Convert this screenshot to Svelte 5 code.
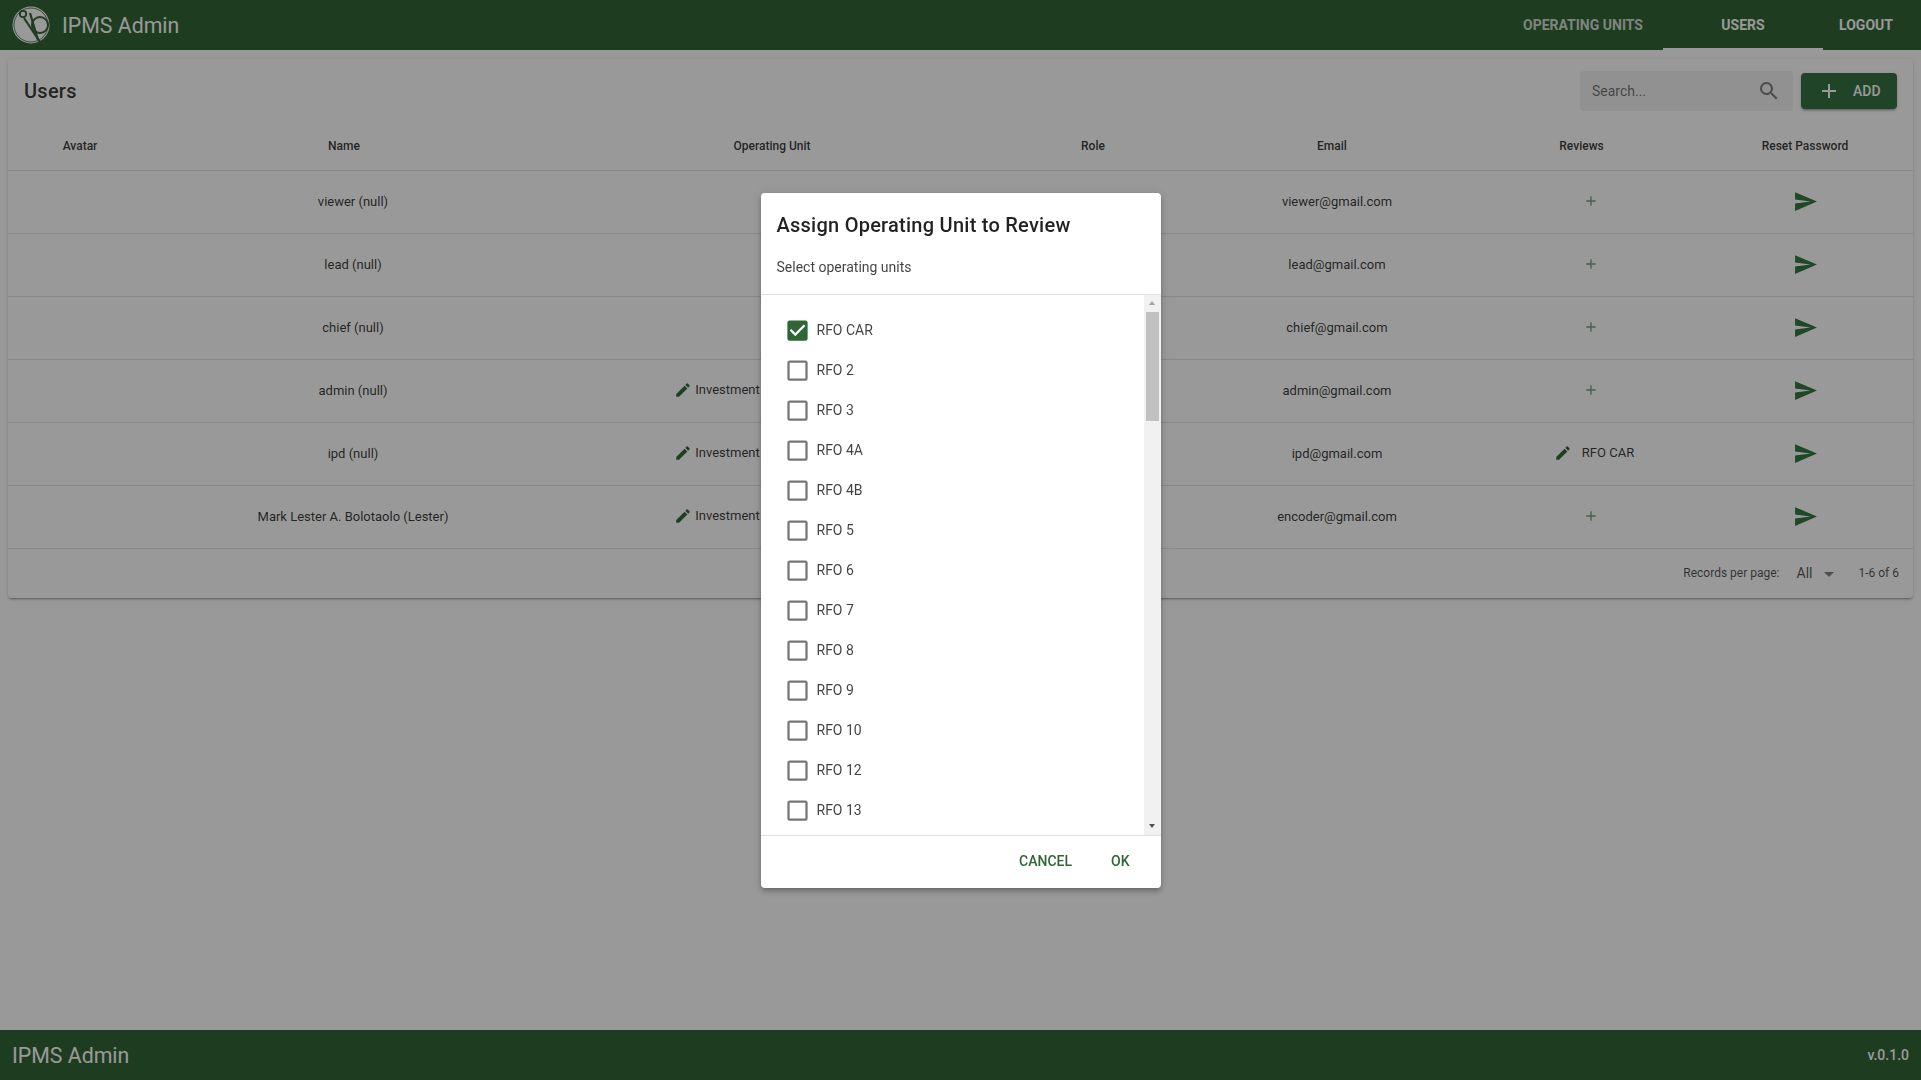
<script lang="ts">
  const users = [
    { name: 'viewer (null)', unit: '', email: 'viewer@gmail.com', review: '' },
    { name: 'lead (null)', unit: '', email: 'lead@gmail.com', review: '' },
    { name: 'chief (null)', unit: '', email: 'chief@gmail.com', review: '' },
    { name: 'admin (null)', unit: 'Investment Programming Division', email: 'admin@gmail.com', review: '' },
    { name: 'ipd (null)', unit: 'Investment Programming Division', email: 'ipd@gmail.com', review: 'RFO CAR' },
    { name: 'Mark Lester A. Bolotaolo (Lester)', unit: 'Investment Programming Division', email: 'encoder@gmail.com', review: '' }
  ];

  const columns = ['Avatar', 'Name', 'Operating Unit', 'Role', 'Email', 'Reviews'];

  const units = ['RFO CAR', 'RFO 2', 'RFO 3', 'RFO 4A', 'RFO 4B', 'RFO 5', 'RFO 6', 'RFO 7', 'RFO 8', 'RFO 9', 'RFO 10', 'RFO 12', 'RFO 13'];

  const pencil = 'M20.71,7.04C21.1,6.65 21.1,6 20.71,5.63L18.37,3.29C18,2.9 17.35,2.9 16.96,3.29L15.12,5.12L18.87,8.87M3,17.25V21H6.75L17.81,9.93L14.06,6.18L3,17.25Z';
  const plus = 'M19,13H13V19H11V13H5V11H11V5H13V11H19V13Z';
  const send = 'M2,21L23,12L2,3V10L17,12L2,14V21Z';
  const magnify = 'M9.5,3A6.5,6.5 0 0,1 16,9.5C16,11.11 15.41,12.59 14.44,13.73L14.71,14H15.5L20.5,19L19,20.5L14,15.5V14.71L13.73,14.44C12.59,15.41 11.11,16 9.5,16A6.5,6.5 0 0,1 3,9.5A6.5,6.5 0 0,1 9.5,3M9.5,5C7,5 5,7 5,9.5C5,12 7,14 9.5,14C12,14 14,12 14,9.5C14,7 12,5 9.5,5Z';
  const boxBlank = 'M19,3H5C3.89,3 3,3.89 3,5V19A2,2 0 0,0 5,21H19A2,2 0 0,0 21,19V5C21,3.89 20.1,3 19,3M19,5V19H5V5H19Z';
  const boxMarked = 'M10,17L5,12L6.41,10.59L10,14.17L17.59,6.58L19,8M19,3H5C3.89,3 3,3.89 3,5V19A2,2 0 0,0 5,21H19A2,2 0 0,0 21,19V5C21,3.89 20.1,3 19,3Z';
</script>

{#snippet icon(d: string, size: number, cls = '')}
  <svg class="icon {cls}" viewBox="0 0 24 24" width={size} height={size}><path {d} /></svg>
{/snippet}

<div class="page">
  <header class="topbar">
    <svg class="logo" viewBox="0 0 40 40" width="40" height="40">
      <circle cx="20" cy="20" r="18.5" fill="#fff" />
      <circle cx="20" cy="20" r="17" fill="none" stroke="#1b5321" stroke-width="0.8" />
      <circle cx="12" cy="9" r="3.2" fill="#fff" stroke="#1b5321" stroke-width="1.8" />
      <path d="M13 13 L29 37" stroke="#1b5321" stroke-width="2.2" fill="none" />
      <path d="M19 8 L27 35" stroke="#1b5321" stroke-width="2.2" fill="none" />
      <circle cx="29" cy="20" r="8" fill="none" stroke="#1b5321" stroke-width="2" />
    </svg>
    <span class="brand">IPMS Admin</span>
    <nav class="tabs">
      <a class="tab" href="#units">OPERATING UNITS</a>
      <a class="tab active" href="#users">USERS</a>
      <a class="tab logout" href="#logout">LOGOUT</a>
    </nav>
  </header>

  <main class="content">
    <section class="card">
      <div class="card-title">
        <h2>Users</h2>
        <div class="search">
          <span class="placeholder">Search...</span>
          {@render icon(magnify, 24, 'muted')}
        </div>
        <button class="add">
          {@render icon(plus, 24, 'light')}
          <span>ADD</span>
        </button>
      </div>

      <table>
        <colgroup>
          <col style="width:162px" />
          <col style="width:366px" />
          <col style="width:490px" />
          <col style="width:152px" />
          <col style="width:318px" />
          <col style="width:201px" />
          <col />
        </colgroup>
        <thead>
          <tr>
            {#each columns as col}
              <th><span class="sortable {col.toLowerCase()}">{col}</span></th>
            {/each}
            <th>Reset Password</th>
          </tr>
        </thead>
        <tbody>
          {#each users as user}
            <tr>
              <td></td>
              <td>{user.name}</td>
              <td>
                {#if user.unit}
                  <span class="assigned">{@render icon(pencil, 18, 'dark')}<span>{user.unit}</span></span>
                {/if}
              </td>
              <td></td>
              <td>{user.email}</td>
              <td>
                {#if user.review}
                  <span class="assigned wide">{@render icon(pencil, 18, 'dark')}<span>{user.review}</span></span>
                {:else}
                  <span class="add-review">{@render icon(plus, 16, 'primary faint')}</span>
                {/if}
              </td>
              <td>{@render icon(send, 25, 'green')}</td>
            </tr>
          {/each}
        </tbody>
      </table>

      <div class="table-footer">
        <span>Records per page:</span>
        <span class="per-page">All<i class="caret"></i></span>
        <span>1-6 of 6</span>
      </div>
    </section>
  </main>

  <footer class="bottombar">
    <span class="brand">IPMS Admin</span>
    <span class="version">v.0.1.0</span>
  </footer>
</div>

<div class="overlay"></div>
<div class="dialog-wrap">
  <div class="dialog">
    <div class="dialog-head">
      <h3>Assign Operating Unit to Review</h3>
      <p>Select operating units</p>
    </div>
    <div class="dialog-body">
      <div class="options">
        {#each units as unit, i}
          <div class="option">
            {@render icon(i === 0 ? boxMarked : boxBlank, 27, i === 0 ? 'primary' : 'blank')}
            <span>{unit}</span>
          </div>
        {/each}
      </div>
      <!-- headless browser hides native scrollbars, so this one is drawn -->
      <div class="scrollbar">
        <i class="arrow up"></i>
        <div class="track"><div class="thumb"></div></div>
        <i class="arrow down"></i>
      </div>
    </div>
    <div class="dialog-actions">
      <button class="text-btn">CANCEL</button>
      <button class="text-btn">OK</button>
    </div>
  </div>
</div>

<style>
  :global(body) {
    margin: 0;
    background: #fff;
    font-family: Roboto, 'Liberation Sans', sans-serif;
    color: rgba(0, 0, 0, 0.87);
    overflow: hidden;
  }

  .page {
    display: flex;
    flex-direction: column;
    height: 1080px;
  }

  .icon {
    display: block;
    flex: none;
    fill: currentColor;
  }

  .icon.primary { color: #2e6635; }
  .icon.green { color: #1c6a2c; }
  .icon.dark { color: #1c5a28; }
  .icon.muted { color: rgba(0, 0, 0, 0.54); }
  .icon.light { color: #fff; }
  .icon.blank { color: rgba(0, 0, 0, 0.54); }
  .icon.faint { opacity: 0.7; }

  /* Top bar */
  .topbar {
    display: flex;
    align-items: center;
    height: 50px;
    padding: 0 12px 0 11px;
    background: #1b5321;
    box-sizing: border-box;
    flex: none;
  }

  .logo {
    margin-right: 11px;
  }

  .brand {
    color: #fff;
    font-size: 21.3px;
    font-weight: 400;
  }

  .tabs {
    display: flex;
    height: 100%;
    margin-left: auto;
  }

  .tab {
    display: flex;
    align-items: center;
    justify-content: center;
    width: 160px;
    height: 100%;
    box-sizing: border-box;
    color: rgba(255, 255, 255, 0.8);
    font-size: 14px;
    font-weight: 700;
    text-decoration: none;
  }

  .tab.active {
    color: #fff;
    border-bottom: 2px solid #fff;
    padding-top: 2px;
  }

  .tab.logout {
    width: 86px;
    color: #fff;
  }

  /* Card */
  .content {
    flex: 1;
    padding: 9px 8px 8px;
  }

  .card {
    background: #fff;
    border-radius: 4px;
    box-shadow: 0 3px 1px -2px rgba(0, 0, 0, 0.2), 0 2px 2px 0 rgba(0, 0, 0, 0.14), 0 1px 5px 0 rgba(0, 0, 0, 0.12);
  }

  .card-title {
    display: flex;
    align-items: center;
    height: 64px;
    padding: 0 16px 0 16px;
    box-sizing: border-box;
  }

  .card-title h2 {
    margin: 0 auto 0 0;
    font-size: 20px;
    font-weight: 500;
    letter-spacing: 0.25px;
  }

  .search {
    display: flex;
    align-items: center;
    justify-content: space-between;
    width: 213px;
    height: 40px;
    padding: 0 12px;
    box-sizing: border-box;
    border-radius: 4px;
    background: rgba(0, 0, 0, 0.06);
  }

  .placeholder {
    font-size: 14px;
    color: rgba(0, 0, 0, 0.6);
  }

  .add {
    display: flex;
    align-items: center;
    width: 96px;
    height: 36px;
    margin-left: 8px;
    padding: 0 0 1px 16px;
    border: none;
    border-radius: 4px;
    background: #1f622f;
    color: #fff;
    font: 500 14px Roboto, sans-serif;
    box-shadow: 0 3px 1px -2px rgba(0, 0, 0, 0.2), 0 2px 2px 0 rgba(0, 0, 0, 0.14), 0 1px 5px 0 rgba(0, 0, 0, 0.12);
  }

  .add span {
    margin-left: 12px;
  }

  /* Table */
  table {
    width: 100%;
    table-layout: fixed;
    border-collapse: collapse;
  }

  th, td {
    text-align: center;
    border-bottom: 1px solid rgba(0, 0, 0, 0.12);
  }

  th {
    height: 47px;
    padding: 0 0 1px;
    box-sizing: border-box;
    font-size: 12px;
    font-weight: 500;
  }

  td {
    padding: 0 0 1px;
    box-sizing: content-box;
    height: 61px;
    font-size: 13px;
  }

  td > .icon {
    margin: 1px auto 0;
  }

  .sortable {
    padding-right: 18px;
  }

  .sortable.email {
    padding-right: 10px;
  }

  .sortable.reviews {
    padding-right: 30px;
  }

  .assigned {
    display: inline-flex;
    align-items: center;
    gap: 3px;
    padding-left: 3px;
    margin-bottom: 2px;
    vertical-align: middle;
  }

  .assigned .icon {
    margin-top: 1px;
  }

  .assigned.wide {
    gap: 10px;
    padding-left: 0;
    padding-right: 5px;
  }

  .add-review {
    display: inline-block;
    padding: 2px 12px 0 0;
  }

  .table-footer {
    display: flex;
    align-items: center;
    justify-content: flex-end;
    height: 49px;
    padding-right: 14px;
    font-size: 12px;
    color: rgba(0, 0, 0, 0.75);
  }

  .per-page {
    display: flex;
    align-items: center;
    margin: 0 24px 0 17px;
    font-size: 14px;
  }

  .caret {
    margin: 2px 0 0 12px;
    border-left: 5px solid transparent;
    border-right: 5px solid transparent;
    border-top: 5px solid rgba(0, 0, 0, 0.54);
  }

  /* Bottom bar */
  .bottombar {
    display: flex;
    align-items: center;
    justify-content: space-between;
    height: 50px;
    padding: 0 12px;
    background: #1b5321;
    flex: none;
  }

  .version {
    color: #fff;
    font-size: 14px;
    font-weight: 500;
  }

  /* Dialog */
  .overlay {
    position: fixed;
    inset: 0;
    background: rgba(33, 33, 33, 0.46);
  }

  .dialog-wrap {
    position: fixed;
    inset: 0;
    display: flex;
    align-items: center;
    justify-content: center;
  }

  .dialog {
    display: flex;
    flex-direction: column;
    width: 400px;
    height: 695px;
    background: #fff;
    border-radius: 4px;
    overflow: hidden;
    box-shadow: 0 2px 4px -1px rgba(0, 0, 0, 0.2), 0 4px 5px 0 rgba(0, 0, 0, 0.14), 0 1px 10px 0 rgba(0, 0, 0, 0.12);
  }

  .dialog-head {
    height: 102px;
    padding: 19px 16px 0;
    box-sizing: border-box;
    border-bottom: 1px solid rgba(0, 0, 0, 0.12);
    flex: none;
  }

  .dialog-head h3 {
    margin: 0;
    font-size: 20px;
    font-weight: 500;
    line-height: 26px;
    letter-spacing: 0.25px;
  }

  .dialog-head p {
    margin: 19px 0 0;
    font-size: 14px;
    line-height: 20px;
    color: rgba(0, 0, 0, 0.75);
  }

  .dialog-body {
    display: flex;
    flex: 1;
    min-height: 0;
  }

  .options {
    flex: 1;
    padding: 16px 0 0 23px;
    overflow: hidden;
  }

  .option {
    display: flex;
    align-items: center;
    gap: 6px;
    height: 40px;
    font-size: 14px;
    color: rgba(0, 0, 0, 0.75);
  }

  .option span {
    margin-bottom: 2px;
  }

  .scrollbar {
    display: flex;
    flex-direction: column;
    align-items: center;
    width: 17px;
    background: #f1f1f1;
    flex: none;
  }

  .track {
    flex: 1;
    width: 13px;
  }

  .thumb {
    height: 109px;
    background: #c1c1c1;
  }

  .arrow {
    width: 0;
    height: 0;
    margin: 6.5px 0;
    border-left: 3.5px solid transparent;
    border-right: 3.5px solid transparent;
  }

  .arrow.up {
    border-bottom: 4px solid #a3a3a3;
  }

  .arrow.down {
    border-top: 4px solid #505050;
  }

  .dialog-actions {
    display: flex;
    align-items: center;
    justify-content: flex-end;
    gap: 7px;
    height: 53px;
    padding: 0 15px 1px 0;
    box-sizing: border-box;
    border-top: 1px solid rgba(0, 0, 0, 0.12);
    flex: none;
  }

  .text-btn {
    height: 36px;
    padding: 0 16px;
    border: none;
    background: none;
    color: #2e6635;
    font: 500 14px Roboto, sans-serif;
  }
</style>
